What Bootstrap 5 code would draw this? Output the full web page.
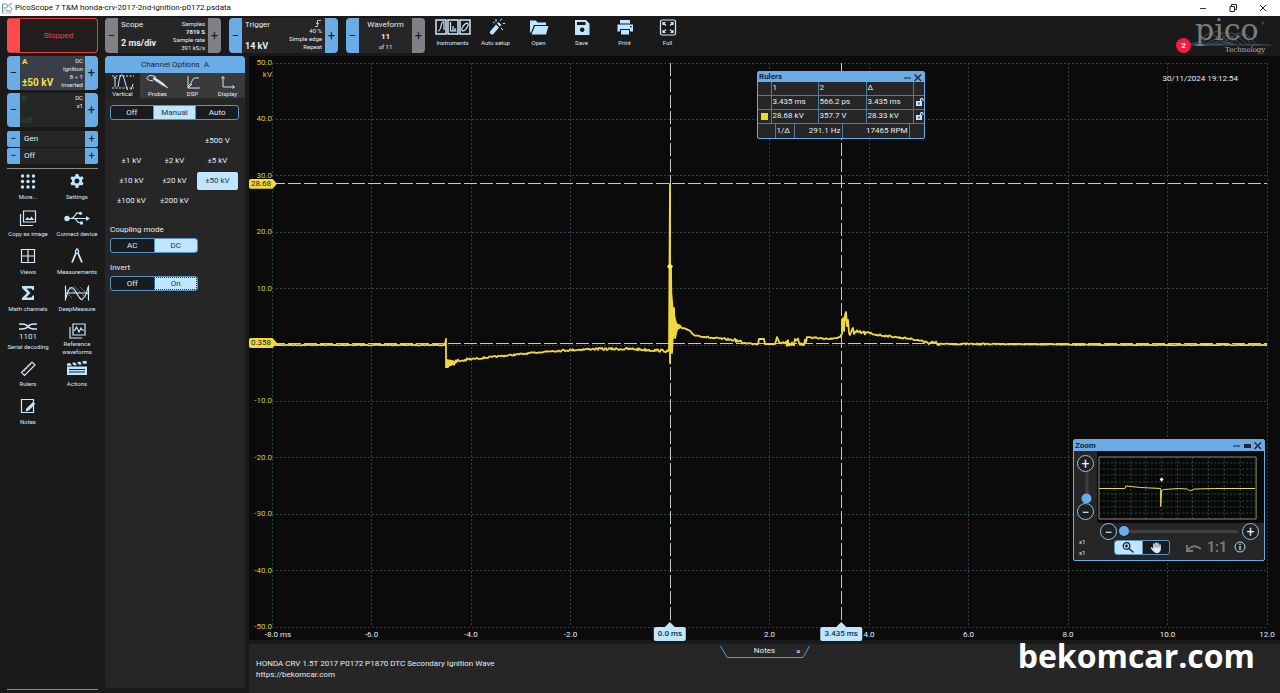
<!DOCTYPE html>
<html lang="en">
<head>
<meta charset="utf-8">
<meta name="viewport" content="width=device-width, initial-scale=1">
<title>PicoScope 7 T&amp;M</title>
<link rel="stylesheet" href="https://cdn.jsdelivr.net/npm/bootstrap@5.3.0/dist/css/bootstrap.min.css">
<style>
:root{--blue:#6aace6;--ice:#bfe6ff;--panel:#262626;--base:#1a1a1a;--plot:#0b0b0b;--trace:#f0d93c;--grey:#818086}
body{font-family:Roboto,"Liberation Sans",sans-serif;font-size:8px;line-height:10px;background:var(--base);color:#e4eef5}
button,input{font-family:inherit}
.app{min-height:100vh}
.tiny{font-size:6px;line-height:8px}
.big{font-size:10px;line-height:12px;font-weight:700}
.mid{font-size:9px;line-height:16px;font-weight:700}
.mid.low{line-height:10px}
.titlebar{height:16px;background:#fff;color:#111;padding-right:2px}
.titlebar button{width:30px;border:0;background:none;padding:0;line-height:0}
.side{width:105px;padding:2px 7px 3px}
.topbar{height:40px;padding-top:2px;gap:8px}
.stopped{height:35px;border:1px solid #e6413f;border-left:13px solid #ff4b4b;border-radius:4px;background:#211d1d;color:#f0413f;font-size:8px;padding:0}
.unit{background:var(--panel);border-radius:4px;overflow:hidden}
.unit .step{width:13px;border:0;padding:0;background:var(--blue);color:#14202c;font-size:13px;line-height:12px;flex:none}
.unit .step.dim{background:var(--grey)}
.unit .body{padding:1px 2px}
.topbar .unit{height:35px}
.topbar .unit .body{padding:2px 3px}
.u-scope{width:116px}.u-trig{width:109px}.u-wave{width:79px}
.chan{height:34px;margin-top:3px}
.chan.on{background:#3a3e48}
.chan .names{width:0;white-space:nowrap}
.gen{height:16px;border-radius:2px;margin-top:1px;line-height:16px}
.chan+.gen{margin-top:4px}
.gen .step{font-size:11px}
.yl{color:#f3e03e}.gr{color:#12612e}
.rule{height:1px;background:#8b8c80}
.rule.upper{margin:4px 0 3px}
.tools{display:grid;grid-template-columns:42px 42px;grid-auto-rows:1fr;height:262px;justify-content:space-between}
.tool{border:0;background:none;padding:0;color:#d8ebf7;font-size:6px;line-height:8px;display:flex;flex-direction:column;align-items:center;white-space:nowrap}
.tool svg{height:18px;width:26px;flex:none;margin-bottom:3px}
.bar{margin-left:-2px}
.bar .tool{width:43px}
.bar .tool svg{width:36px}
.tool.two svg{margin-bottom:0}
.ico{fill:none;stroke:#cfe9fb;stroke-width:1.2}
.ico .f,.f{fill:#bfe6ff;stroke:none}
.opts{width:140px;background:var(--panel);border-radius:4px;margin-bottom:5px}
.opts h1{margin:0;height:17px;font-size:8px;line-height:17px;font-weight:400;background:var(--blue);color:#182a3c;border-radius:4px 4px 0 0}
.opts form{padding:7px 6px 0 5px}
.tabs{background:#3a3a3a}
.tabs button{width:35px;height:25px;border:0;padding:0 0 1px;background:none;color:#e4eef5;font-size:6px;line-height:7px}
.tabs button.active{background:#222}
.tabs svg{width:28px;height:16px;display:block;margin:0 auto}
.seg{border:1px solid #5b93c4;border-radius:3px;overflow:hidden;background:#181b1f}
.seg label{flex:1;height:13px;line-height:13px;text-align:center;cursor:pointer}
.seg label+input+label{border-left:1px solid #5b93c4}
.seg.pair{width:88px}
.btn-check:checked+label{background:var(--ice);color:#223445}
.btn-check:checked+label.dotted{outline:1px dotted #334;outline-offset:-1px}
.ranges{display:grid;grid-template-columns:repeat(3,1fr);grid-auto-rows:20px;margin:12px 0 13px}
.ranges label{text-align:center;line-height:18px;margin:0 1px 2px;border-radius:2px;cursor:pointer}
.caption{line-height:10px;margin-bottom:3px}
.seg+.caption{margin-top:10px}
.scope{background:var(--plot);padding:7px 13px 13px 23px}
.plot{min-height:300px}
.plot>svg{display:block;position:absolute;width:100%;height:100%;overflow:visible}
.ylab{position:absolute;right:100%;top:0;bottom:0;width:23px;text-align:right;color:#d9c845}
.ylab.unitname{top:7px}
.ylab span{height:0;line-height:0;display:block}
.xlab{position:absolute;left:0;right:0;top:100%;height:0}
.xlab span{width:0;white-space:nowrap;display:flex;justify-content:center;line-height:15px}
.xlab span:first-child{padding-left:6px;margin-right:-6px}
.flag{position:absolute;background:var(--trace);color:#222;height:10px;line-height:10px;width:28px;right:100%;margin-right:-5px;margin-top:-5px;padding-left:2px;clip-path:polygon(0 0,84% 0,100% 50%,84% 100%,0 100%);border-radius:2px}
.pin{position:absolute;top:100%;background:var(--ice);color:#1c2e3e;height:14px;line-height:14px;border-radius:2px;transform:translateX(-50%);padding:0 4px;font-weight:500;white-space:nowrap}
.pin:before{content:"";position:absolute;left:50%;top:-5px;margin-left:-5px;border:5px solid transparent;border-top:0;border-bottom-color:var(--ice)}
.stamp{position:absolute;right:29px;top:10px;line-height:11px}
.win{position:absolute;border:1px solid var(--blue);border-radius:2px;background:var(--panel)}
.win header{background:var(--blue);color:#15273a;height:10px;line-height:10px;padding:0 1px}
.win header button{border:0;background:none;padding:0;line-height:0}
.rulers{width:168px;top:8px;right:342px}
.rulers table{width:100%;border-collapse:collapse;table-layout:fixed}
.rulers td,.rulers th{border:1px solid #4c7ba3;padding:0 1px;height:14px;line-height:12px;font-weight:400;white-space:nowrap}
.rulers tr:first-child>*{border-top:0;height:13px}
.rulers tr>*:first-child{border-left:0}.rulers tr>*:last-child{border-right:0}
.rulers table+table tr>*{border-bottom:0;height:15px;line-height:14px}
.c13{width:13px}.c17{width:17px}.c19{width:19px}.c47{width:47px}.c48{width:48px}.c67{width:67px}
.sq{display:block;width:7px;height:7px;background:#f2d829;margin:auto}
.zoomwin{width:192px;right:2px;top:376px;padding-bottom:6px}
.zoomwin header{height:11px;line-height:11px}
.zoomwin .left{width:23px;padding:4px 0 0 3px}
.mini{background:#090909;padding:5px 7px 3px 1px}
.mini svg{display:block;width:100%;height:64px}
.round{width:17px;height:17px;border-radius:50%;border:1px solid #9fc0dc;background:#1c2023;color:#eef;font-size:14px;line-height:14px;padding:0;flex:none}
.zoomwin input[type=range]{appearance:none;background:none;margin:0 4px 0 2px;padding:0;height:10px;min-width:0}
.zoomwin input[type=range]::-webkit-slider-runnable-track{height:3px;background:#3f3f42}
.zoomwin input[type=range]::-webkit-slider-thumb{appearance:none;width:10px;height:10px;border-radius:50%;background:var(--blue);margin-top:-4px;border:0}
.vbox{height:31px;width:10px;display:flex;align-items:center;justify-content:center}
.zoomwin .vbox input{width:31px;margin:0;transform:rotate(-90deg);flex:none}
.hslide{padding:0 5px 0 26px}
.zrow{height:14px;padding:0 18px 0 5px}
.zrow .tiny{width:35px;line-height:11px}
.seg.pick{width:56px}
.zoomwin .seg label{line-height:0}
.ghost{border:0;background:none;color:#77787a;padding:0;font-size:14px;line-height:14px;font-weight:700}
.ghost+.ghost{margin-left:4px}
.ghost+.ghost+.ghost{margin-left:7px}
.notes{background:var(--panel);height:49px;margin-top:4px;padding:0 7px}
.notetab{position:absolute;left:50%;transform:translateX(-50%);top:2px;width:90px;height:12px}
.notetab svg{position:absolute;inset:0;width:100%;height:100%}
.notetab button{position:absolute;right:9px;top:0;border:0;background:none;color:inherit;padding:0;font-size:8px;line-height:11px}
.notes p{margin:0;padding-top:14px;line-height:11px}
.notes a{color:inherit;text-decoration:none}
.mark-site{position:absolute;right:25px;top:-4px;font:700 32px/32px "Open Sans",sans-serif;color:#fff}
.count{width:15px;height:15px;border-radius:50%;background:#f21c44;color:#fff;line-height:15px;text-align:center;font-size:8px;font-weight:700;margin-bottom:3px}
.brand{width:80px;height:39px;margin-right:9px;overflow:visible}
</style>
</head>
<body>
<div class="app d-flex flex-column">
<header class="titlebar d-flex align-items-center">
  <svg width="15" height="14" viewBox="0 0 15 14" class="flex-shrink-0" fill="none" stroke="#6c8fb0" aria-hidden="true"><path d="M2.500 12V3h3q2 0 2 2t-2 2h-3M12 3H9.500q-1.500 1.500 0 2.500l2 1.500q1 2-1 3H6"/><path d="M2 12h10M3 10q4-3 8 1" stroke="#a9c3da"/></svg>
  <span class="flex-grow-1">PicoScope 7 T&amp;M honda-crv-2017-2nd-ignition-p0172.psdata</span>
  <button aria-label="Minimise"><svg width="8" height="8" viewBox="0 0 8 8" stroke="#333"><path d="M1 4.500h6"/></svg></button>
  <button aria-label="Restore"><svg width="8" height="8" viewBox="0 0 8 8" fill="none" stroke="#222"><path d="M1 2.500h4.500v5H1zM2.500 2.500v-2h5v5h-2"/></svg></button>
  <button aria-label="Close"><svg width="8" height="8" viewBox="0 0 8 8" stroke="#222"><path d="M1 1l6 6M7 1L1 7"/></svg></button>
</header>

<div class="d-flex flex-grow-1">
<aside class="side d-flex flex-column flex-shrink-0">
  <button class="stopped w-100">Stopped</button>
  <div class="unit chan on d-flex">
    <button class="step">−</button>
    <div class="body d-flex flex-grow-1 justify-content-between">
      <div class="names yl d-flex flex-column justify-content-between"><span class="fw-bold">A</span><span class="big">±50 kV</span></div>
      <div class="tiny text-end">DC<br>Ignition<br>8 ÷ 1<br>Inverted</div>
    </div>
    <button class="step">+</button>
  </div>
  <div class="unit chan d-flex">
    <button class="step">−</button>
    <div class="body d-flex flex-grow-1 justify-content-between">
      <div class="names gr d-flex flex-column justify-content-between"><span>B</span><span>Off</span></div>
      <div class="tiny text-end">DC<br>x1</div>
    </div>
    <button class="step">+</button>
  </div>
  <div class="unit gen d-flex"><button class="step">−</button><span class="flex-grow-1 ps-1">Gen</span><button class="step">+</button></div>
  <div class="unit gen d-flex"><button class="step">−</button><span class="flex-grow-1 ps-1">Off</span><button class="step">+</button></div>
  <div class="rule upper"></div>
  <nav class="tools">
    <button class="tool"><svg viewBox="0 0 26 18" class="f"><g id="d"><circle cx="7.500" cy="4" r="1.700"/><circle cx="13" cy="4" r="1.700"/><circle cx="18.500" cy="4" r="1.700"/></g><use href="#d" y="5.500"/><use href="#d" y="11"/></svg>More...</button>
    <button class="tool"><svg viewBox="0 0 26 18" class="f"><path fill-rule="evenodd" d="M11.700 2h2.600l.5 2.100 1.400.8 2.100-.6 1.300 2.300-1.600 1.500v1.700l1.600 1.500-1.300 2.300-2.100-.6-1.400.8-.5 2.200h-2.600l-.5-2.200-1.400-.8-2.100.6-1.300-2.300L8 9.800V8.100L6.400 6.600l1.300-2.300 2.100.6 1.400-.8zM13 6.500a2.500 2.500 0 100 5 2.500 2.500 0 000-5z"/></svg>Settings</button>
    <button class="tool"><svg viewBox="0 0 26 18" class="ico"><path d="M8.500 2h12v11h-12zM5.500 5v11.500H18"/><path class="f" d="M10 11l2.500-3 2 2 2-2.500 2.800 3.500z"/></svg>Copy as image</button>
    <button class="tool"><svg viewBox="0 0 26 18" class="ico"><circle class="f" cx="3" cy="9.500" r="2.700"/><path d="M3 9.500h20M7 9.500q2 0 4-3l1.500-2.300H16M10 9.500q2 0 3 2.500 1 2 4 2"/><path class="f" d="M22 7l4 2.500-4 2.500z"/><circle class="f" cx="16.500" cy="4.300" r="1.600"/><path class="f" d="M16 12.500h3v3h-3z"/></svg>Connect device</button>
    <button class="tool"><svg viewBox="0 0 26 18" class="ico"><path d="M6.500 2.500h13v13h-13zM13 2.500v13M6.500 9h13"/></svg>Views</button>
    <button class="tool"><svg viewBox="0 0 26 18" class="ico"><circle cx="13" cy="4.500" r="1.700"/><path d="M12 6L8 15.500M14 6l4 9.500" stroke-width="1.800"/><path d="M13 1v2"/></svg>Measurements</button>
    <button class="tool"><svg viewBox="0 0 26 18" class="f"><path d="M7 2h12v4h-1.500L16.500 4.500h-5L15.500 9l-4.500 4.500h5.500l1-2H19V16H7v-2l5-5-5-5z"/></svg>Math channels</button>
    <button class="tool"><svg viewBox="0 0 26 18" class="ico"><path d="M1.500 1.500v15M24.500 1.500v15M1.500 9h23" /><path d="M2 14Q6-3 12 8t7 6q3-1 5-11"/><path d="M2 5l3 3M5 3l6 6M10 2l12 12M16 3l8 8M4 10l4 4" stroke-width=".4"/></svg>DeepMeasure</button>
    <button class="tool"><svg viewBox="0 0 26 18" class="ico"><path d="M4 2h3q4 0 6 2.500T19 7h3M4 7h3q4 0 6-2.500T19 2h3" stroke-width="1.500"/><text x="13" y="17" text-anchor="middle" font-size="8" fill="#cfe9fb" stroke="none">1101</text></svg>Serial decoding</button>
    <button class="tool two"><svg viewBox="0 0 26 18" class="ico"><path d="M9 2h12v11H9zM6 5v11h12M10.500 9l2-4 2.500 5 2-4 1 2h2"/></svg>Reference<br>waveforms</button>
    <button class="tool"><svg viewBox="0 0 26 18" class="ico"><path d="M6.500 13.500L17 3l3 3L9.500 16.500zM9 11l1 1M11 9l1 1M13 7l1 1M15 5l1 1"/></svg>Rulers</button>
    <button class="tool"><svg viewBox="0 0 26 18" class="f"><path fill-rule="evenodd" d="M3 7.500h20V16H3zM5 10h16v1H5zM5 12.500h16v1H5zM3 4.500l3-.4L8 6.800H3zM8 3.800l3-.4 2 2.600-3 .5zM13 3.100l3-.4 2 2.600-3 .5zM18 2.400l4.500-.6.3 2.800-3 .5z"/></svg>Actions</button>
    <button class="tool"><svg viewBox="0 0 26 18" class="ico"><path d="M18.500 9v6.500h-12v-13h12V6"/><path class="f" d="M10.500 14.500l.8-3L18 5l2.300 2-6.500 6.500z"/></svg>Notes</button>
  </nav>
  <div class="rule mt-auto"></div>
</aside>

<div class="flex-grow-1 d-flex flex-column" style="min-width:0">
  <div class="topbar d-flex">
    <div class="unit u-scope d-flex">
      <button class="step dim">−</button>
      <div class="body d-flex flex-grow-1 justify-content-between">
        <div class="d-flex flex-column justify-content-between text-nowrap"><span>Scope</span><span class="mid">2 ms/div</span></div>
        <div class="tiny text-end text-nowrap">Samples<br><b>7819 S</b><br>Sample rate<br>391 kS/s</div>
      </div>
      <button class="step dim">+</button>
    </div>
    <div class="unit u-trig d-flex">
      <button class="step">−</button>
      <div class="body d-flex flex-grow-1 justify-content-between">
        <div class="d-flex flex-column justify-content-between text-nowrap"><span>Trigger</span><span class="mid low">14 kV</span></div>
        <div class="tiny text-end text-nowrap"><svg width="7" height="7" viewBox="0 0 7 7" class="ico d-block ms-auto"><path d="M0 6.500h2.500v-6H6M1 4l1.500-1.500L4 4" stroke-width=".8"/></svg>40 %<br>Simple edge<br>Repeat</div>
      </div>
      <button class="step">+</button>
    </div>
    <div class="unit u-wave d-flex">
      <button class="step">−</button>
      <div class="body d-flex flex-column justify-content-between flex-grow-1 text-center"><span>Waveform</span><b>11</b><span class="tiny">of 11</span></div>
      <button class="step dim">+</button>
    </div>
    <div class="bar d-flex">
      <button class="tool"><svg viewBox="0 0 36 18" class="ico"><path d="M1 2h10v14H1zM13 2h10v14H13zM25 2h10v14H25z" stroke-width="1.500"/><path d="M3 13q2 0 3-5t3-4v8M15.500 4v9h6M18 8v5M20 10v3" /><ellipse cx="30" cy="9" rx="2" ry="4.500" transform="rotate(35 30 9)"/></svg>Instruments</button>
      <button class="tool"><svg viewBox="0 0 36 18" class="ico"><path class="f" d="M12 13.500l6-7 3 3-6 7q-4 0-3-3zM19 5.500l1.500-1.500 3 3L22 8.500z"/><path d="M18 1v3M15 4l1.500 1M23 10l2 2M22 2.500L24 1M25 5.500h2" stroke-width="1"/></svg>Auto setup</button>
      <button class="tool"><svg viewBox="0 0 36 18" class="f"><path d="M9 2.500h6l1.500 2H25v2.500H13l-3 7.500H9z"/><path d="M14 8h13.500L25 16.500H10.500z"/></svg>Open</button>
      <button class="tool"><svg viewBox="0 0 36 18" class="f"><path fill-rule="evenodd" d="M11 2h11l3.500 3.500V17H11zM13 4v3h8.500V4zM18.200 9.500a2.300 2.300 0 100 4.600 2.300 2.300 0 000-4.600z"/></svg>Save</button>
      <button class="tool"><svg viewBox="0 0 36 18" class="f"><path fill-rule="evenodd" d="M13 2h10v3.500H13zM10.500 6.500h15.500v7h-3V11H13v2.500H10.500zM23 8v1.500h1.500V8zM14 12h8v4.500h-8z"/></svg>Print</button>
      <button class="tool"><svg viewBox="0 0 36 18" class="ico"><rect x="10.500" y="2" width="15" height="15" rx="1.500"/><path d="M13 7V4.500h2.500M13 4.500l3 3M23 7V4.500h-2.500M23 4.500l-3 3M13 12v2.500h2.500M13 14.500l3-3M23 12v2.500h-2.500M23 14.500l-3-3"/></svg>Full</button>
    </div>
    <div class="ms-auto d-flex align-items-end">
      <span class="count">2</span>
      <svg class="brand" viewBox="0 0 80 39" role="img" aria-label="pico Technology"><g fill="none" stroke="#5f88a6" stroke-width=".5"><path d="M0 27Q9 26 13 20t10-2 10 7 12 2M3 28Q14 26 20 18t12 1 10 8M8 28Q22 26 27 19t14 1 11 7M14 28Q28 26 34 19t15 2 9 6M20 28Q34 26 42 19t14 3 8 5M26 28q16-2 22-8t12 2 8 5M0 28h80"/></g><text x="4" y="23" font-size="30" font-family="DejaVu Serif" fill="#7d7d7f">pico</text><text x="34" y="35" font-size="7" font-family="DejaVu Serif" fill="#b5b5b5">Technology</text><circle cx="72" cy="6" r="1" fill="none" stroke="#777" stroke-width=".5"/></svg>
    </div>
  </div>

  <div class="flex-grow-1 d-flex gap-1">
    <section class="opts flex-shrink-0">
      <h1 class="text-center">Channel Options&nbsp; A</h1>
      <div class="tabs d-flex">
        <button class="active"><svg viewBox="0 0 28 16" class="ico"><path d="M3 2h22M3 14h22" stroke-dasharray="2 1.500" stroke-width="1"/><path d="M6 3v10M4.500 4.500L6 3l1.500 1.500M9 13Q12-9 16 8t8 2" stroke-width="1"/></svg>Vertical</button>
        <button><svg viewBox="0 0 28 16" class="ico"><path d="M12 3Q6 0 3.500 3T9 7" stroke-width="1"/><path d="M10 3l9 6 5 5-6-3-9-6z" fill="#cfe9fb" stroke-width=".5"/></svg>Probes</button>
        <button><svg viewBox="0 0 28 16" class="ico"><path d="M9 2v12h12M9 12q3-1 4-5t7-3M9 14l4-4" stroke-width="1"/></svg>DSP</button>
        <button><svg viewBox="0 0 28 16" class="ico"><path d="M9 3v10h11M7.500 4.500L9 2.500l1.500 2M18.500 11.500l2 1.500-2 1.500" stroke-width="1"/></svg>Display</button>
      </div>
      <form>
        <div class="seg d-flex">
          <input class="btn-check" type="radio" name="m" id="m1"><label for="m1">Off</label>
          <input class="btn-check" type="radio" name="m" id="m2" checked><label for="m2">Manual</label>
          <input class="btn-check" type="radio" name="m" id="m3"><label for="m3">Auto</label>
        </div>
        <div class="ranges">
          <span></span><span></span>
          <input class="btn-check" type="radio" name="r" id="r0"><label for="r0">±500 V</label>
          <input class="btn-check" type="radio" name="r" id="r1"><label for="r1">±1 kV</label>
          <input class="btn-check" type="radio" name="r" id="r2"><label for="r2">±2 kV</label>
          <input class="btn-check" type="radio" name="r" id="r3"><label for="r3">±5 kV</label>
          <input class="btn-check" type="radio" name="r" id="r4"><label for="r4">±10 kV</label>
          <input class="btn-check" type="radio" name="r" id="r5"><label for="r5">±20 kV</label>
          <input class="btn-check" type="radio" name="r" id="r6" checked><label for="r6">±50 kV</label>
          <input class="btn-check" type="radio" name="r" id="r7"><label for="r7">±100 kV</label>
          <input class="btn-check" type="radio" name="r" id="r8"><label for="r8">±200 kV</label>
        </div>
        <div class="caption">Coupling mode</div>
        <div class="seg pair d-flex">
          <input class="btn-check" type="radio" name="c" id="c1"><label for="c1">AC</label>
          <input class="btn-check" type="radio" name="c" id="c2" checked><label for="c2">DC</label>
        </div>
        <div class="caption">Invert</div>
        <div class="seg pair d-flex">
          <input class="btn-check" type="radio" name="i" id="i1"><label for="i1">Off</label>
          <input class="btn-check" type="radio" name="i" id="i2" checked><label for="i2" class="dotted">On</label>
        </div>
      </form>
    </section>

    <main class="flex-grow-1 d-flex flex-column" style="min-width:0">
      <div class="scope flex-grow-1 d-flex flex-column">
        <div class="plot position-relative flex-grow-1">
          <svg viewBox="0 0 995 564" preserveAspectRatio="none" fill="none" role="img" aria-label="Secondary ignition waveform">
            <g id="grid" stroke="#24444a" stroke-dasharray="2 2"></g>
            <g stroke="#c4c8c9" stroke-dasharray="13 3"><path d="M0 120.500h995M0 280.500h995"/><path d="M398.500 0v564M569.500 0v564"/></g>
            <path id="trace" stroke="#f0d93c" stroke-width="1.800" stroke-linejoin="round"/>
            <path d="M397 200h2v80h-2zM398 203l2 27 2 20 3 10 4 5-5 3-2 6-2 5-2 18-1-18zM174 296l6 1 6 2-7 4-5 1z" fill="#f0d93c"/>
            <path d="M398 200l3 3.500-3 3.500-3-3.500z" fill="#fff04a"/>
          </svg>
          <div class="ylab d-flex flex-column justify-content-between"><span>50.0</span><span>40.0</span><span>30.0</span><span>20.0</span><span>10.0</span><span></span><span>-10.0</span><span>-20.0</span><span>-30.0</span><span>-40.0</span><span>-50.0</span></div>
          <div class="ylab unitname">kV</div>
          <div class="flag" style="top:21.400%">28.68</div>
          <div class="flag" style="top:49.650%">0.358</div>
          <div class="xlab d-flex justify-content-between"><span>-8.0 ms</span><span>-6.0</span><span>-4.0</span><span>-2.0</span><span></span><span>2.0</span><span>4.0</span><span>6.0</span><span>8.0</span><span>10.0</span><span>12.0</span></div>
          <div class="pin" style="left:40%">0.0 ms</div>
          <div class="pin" style="left:57.200%">3.435 ms</div>
          <div class="stamp">30/11/2024 19:12:54</div>

          <section class="win rulers">
            <header class="d-flex align-items-center"><b class="flex-grow-1">Rulers</b><button aria-label="Minimise"><svg width="10" height="9" viewBox="0 0 10 9" stroke="#223" fill="none"><path d="M1 5h7"/></svg></button><button aria-label="Close"><svg width="10" height="9" viewBox="0 0 10 9" stroke="#223" stroke-width="1.400"><path d="M1.500 1.500l6.500 6.500M8 1.500L1.500 8"/></svg></button></header>
            <table><colgroup><col class="c13"><col class="c47"><col class="c48"><col class="c47"><col></colgroup>
              <tr><td></td><th>1</th><th>2</th><th>Δ</th><td></td></tr>
              <tr><td></td><td>3.435 ms</td><td>566.2 ps</td><td>3.435 ms</td><td><svg width="9" height="8" viewBox="0 0 9 8" class="ico"><path class="f" fill-rule="evenodd" d="M1 3h6v5H1zM3.400 4.500v2h1.200v-2z"/><path d="M5.500 3V2q0-1.500 1.200-1.500T8 2v1"/></svg></td></tr>
              <tr><td><span class="sq"></span></td><td>28.68 kV</td><td>357.7 V</td><td>28.33 kV</td><td><svg width="9" height="8" viewBox="0 0 9 8" class="ico"><path class="f" fill-rule="evenodd" d="M1 3h6v5H1zM3.400 4.500v2h1.200v-2z"/><path d="M5.500 3V2q0-1.500 1.200-1.500T8 2v1"/></svg></td></tr>
            </table>
            <table><colgroup><col class="c17"><col class="c19"><col class="c48"><col class="c67"><col></colgroup>
              <tr><td></td><td>1/Δ</td><td class="text-end">291.1 Hz</td><td class="text-end">17465 RPM</td><td></td></tr>
            </table>
          </section>

          <section class="win zoomwin">
            <header class="d-flex align-items-center"><b class="flex-grow-1">Zoom</b><button aria-label="Minimise"><svg width="11" height="9" viewBox="0 0 11 9" stroke="#223"><path d="M2 5h7"/></svg></button><button aria-label="Maximise"><svg width="11" height="9" viewBox="0 0 11 9" fill="#223"><path d="M2 3h7v4H2z"/></svg></button><button aria-label="Close"><svg width="10" height="9" viewBox="0 0 10 9" stroke="#223" stroke-width="1.400"><path d="M1.500 1.500l6.500 6.500M8 1.500L1.500 8"/></svg></button></header>
            <div class="d-flex">
              <div class="left d-flex flex-column align-items-start"><button class="round">+</button><div class="vbox ms-1"><input type="range" min="0" max="10" value="0" aria-label="Vertical zoom"></div><button class="round">−</button></div>
              <div class="mini flex-grow-1"><svg viewBox="0 0 160 64" preserveAspectRatio="none" fill="none"><path d="M1 1h158v62H1z" stroke="#8d8a78"/><g stroke="#2f6053" stroke-dasharray="2 2" stroke-width=".8"><path d="M17 1v62M33 1v62M48 1v62M64 1v62M80 1v62M95 1v62M111 1v62M127 1v62M143 1v62M1 7h158M1 13h158M1 19h158M1 26h158M1 38h158M1 45h158M1 51h158M1 57h158"/></g><path d="M1 32.500h26l1-2.500 15 1.500 20 1v18l1-16 2-1 15-1 9 .5 2 2 5-2 20-.5h41" stroke="#e8dc5a"/><path d="M64 21.500l2 2-2 2-2-2z" fill="#fff"/></svg></div>
            </div>
            <div class="hslide d-flex align-items-center"><button class="round">−</button><input class="flex-grow-1" type="range" min="0" max="10" value="0" aria-label="Horizontal zoom"><button class="round">+</button></div>
            <div class="zrow d-flex align-items-center">
              <div class="tiny">x1<br>x1</div>
              <div class="seg pick d-flex me-auto">
                <input class="btn-check" type="radio" name="z" id="z1" checked><label for="z1" aria-label="Zoom tool"><svg width="14" height="13" viewBox="0 0 14 13" fill="none" stroke="#16232f" stroke-width="1.300"><circle cx="5.500" cy="5" r="3.300"/><path d="M8 7.500l4.500 4M4 5h3M5.500 3.500v3"/></svg></label>
                <input class="btn-check" type="radio" name="z" id="z2"><label for="z2" aria-label="Pan tool"><svg width="14" height="13" viewBox="0 0 14 13" fill="none" stroke="#dcecf8" stroke-width="1.500" stroke-linecap="round"><path d="M5 7V3M7 6V2M9 6V2.500M11 7V4M2.500 7L5 10"/><path d="M4.500 6.500h7V9q-1 3-3.500 3t-3-2z" fill="#dcecf8" stroke-width="0.500"/></svg></label>
              </div>
              <button class="ghost" aria-label="Undo"><svg class="d-block" width="18" height="11" viewBox="0 0 18 11" fill="none" stroke="#77787a" stroke-width="2"><path d="M2 3v6h6M2.500 8.500Q8 1 16 7"/></svg></button>
              <button class="ghost">1:1</button>
              <button class="ghost" aria-label="Help"><svg class="d-block" width="12" height="12" viewBox="0 0 12 12" fill="none" stroke="#a9d4f5"><circle cx="6" cy="6" r="5"/><path d="M6 5v4M6 2.800v1.200" stroke-width="1.400"/></svg></button>
            </div>
          </section>
        </div>
      </div>
      <footer class="notes position-relative">
        <p>HONDA CRV 1.5T 2017 P0172 P1870 DTC Secondary Ignition Wave<br><a href="https://bekomcar.com">https://bekomcar.com</a></p>
        <div class="notetab text-center"><svg viewBox="0 0 90 12" fill="none" stroke="#5c9bd0"><path d="M.5 0L7 11.500h76L89.500 0"/></svg><span>Notes</span><button aria-label="Close notes">×</button></div>
        <div class="mark-site">bekomcar.com</div>
      </footer>
    </main>
  </div>
</div>
</div>
</div>
<script src="https://cdn.jsdelivr.net/npm/bootstrap@5.3.0/dist/js/bootstrap.bundle.min.js"></script>
<script>
// Graticule: ten divisions each way
let g = '';
for (let i = 0; i <= 10; i++) g += `<path d="M${Math.floor(i * 99.5) + .5} 0V564M0 ${Math.floor(i * 56.4) + .5}H995"/>`;
document.getElementById('grid').innerHTML = g;

// Key points of the waveform as [x, y, noise], joined with seeded jitter
const keys = [[0,282,.4],[173,282,.6],[174,276,0],[174,304,0],[175,304,3],[180,300,2.500],[187,298,1.500],[200,296,.8],[220,294,.7],[250,291,.7],[280,288,1],[320,286,1.200],[360,286,1.300],[396,288,.8],[397,286,0],[398,121,0],[398,300,0],[399,205,0],[400,290,0],[402,245,0],[403,275,0],[406,262,1],[410,265,1],[416,267,.8],[422,272,.8],[440,275,1],[462,277,1.500],[472,280,.6],[486,281,.4],[487,276,0],[492,276,.5],[493,281,0],[503,281,.3],[505,274,0],[507,279,1],[513,280,4],[534,279,4],[535,274,1.500],[545,275,1],[560,276,.5],[568,274,1],[570,271,0],[571,255,0],[572,268,0],[573,252,0],[574,249,0],[575,263,0],[576,257,0],[577,270,0],[578,272,1],[581,265,0],[582,271,1.500],[584,269,2],[600,271,1],[615,273,.8],[640,276,.7],[655,279,2],[668,281,.6],[720,281,.4],[850,282,.3],[995,282,.3]];
let seed = 7;
const rnd = () => (seed = seed * 16807 % 2147483647) / 2147483647 * 2 - 1;
let p = '';
keys.forEach(([x, y, n], i) => {
  p += (i ? 'L' : 'M') + x + ' ' + y;
  const next = keys[i + 1];
  if (!next || !n) return;
  for (let t = x + 1; t < next[0]; t++) {
    const k = (t - x) / (next[0] - x);
    p += `L${t} ${(y + (next[1] - y) * k + rnd() * n).toFixed(1)}`;
  }
});
document.getElementById('trace').setAttribute('d', p);
</script>
</body>
</html>
